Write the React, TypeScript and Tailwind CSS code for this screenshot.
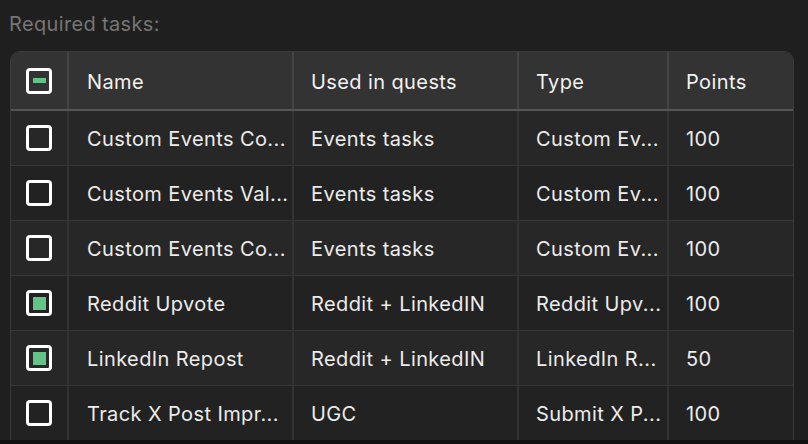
type Task = {
  name: string;
  quests: string;
  type: string;
  points: number;
  checked: boolean;
};

// labels already cut the way the table shows them
const tasks: Task[] = [
  { name: 'Custom Events Co...', quests: 'Events tasks', type: 'Custom Ev...', points: 100, checked: false },
  { name: 'Custom Events Val...', quests: 'Events tasks', type: 'Custom Ev...', points: 100, checked: false },
  { name: 'Custom Events Co...', quests: 'Events tasks', type: 'Custom Ev...', points: 100, checked: false },
  { name: 'Reddit Upvote', quests: 'Reddit + LinkedIN', type: 'Reddit Upv...', points: 100, checked: true },
  { name: 'LinkedIn Repost', quests: 'Reddit + LinkedIN', type: 'LinkedIn R...', points: 50, checked: true },
  { name: 'Track X Post Impr...', quests: 'UGC', type: 'Submit X P...', points: 100, checked: false },
];

function Checkbox({ state }: { state: 'on' | 'off' | 'some' }) {
  return (
    <div className="w-[26px] h-[26px] border-[3px] border-white rounded-[4px] flex items-center justify-center">
      {state === 'on' && <div className="w-[13px] h-[13px] bg-[#62c487]" />}
      {state === 'some' && <div className="w-[13px] h-[5px] bg-[#62c487]" />}
    </div>
  );
}

const grid = 'grid grid-cols-[58px_225px_225px_150px_124px]';

export default function App() {
  return (
    <div
      className="w-[808px] h-[444px] bg-[#1f1f1f] flex flex-col overflow-hidden"
      style={{ fontFamily: 'Inter, "Noto Sans", sans-serif' }}
    >
      <div className="h-[440px] overflow-hidden pl-[9px]">
        <div className="h-[51px] pt-[10px] text-[20px] leading-[28px] tracking-[0.35px] text-[#767676]">
          Required tasks:
        </div>

        <div className="ml-[1px] w-[784px] border border-[#3a3a3a] rounded-t-[10px] overflow-hidden">
          <div className={`${grid} h-[59px] bg-[#333333] border-b-2 border-[#555555] text-[20px] tracking-[0.4px] text-[#f2f2f2]`}>
            <div className="flex items-center justify-center border-r-2 border-[#444444]">
              <Checkbox state="some" />
            </div>
            <div className="flex items-center pt-[2px] px-[18px] border-r-2 border-[#444444]">Name</div>
            <div className="flex items-center pt-[2px] px-[17px] border-r-2 border-[#444444]">Used in quests</div>
            <div className="flex items-center pt-[2px] px-[17px] border-r-2 border-[#444444]">Type</div>
            <div className="flex items-center pt-[2px] px-[17px]">Points</div>
          </div>

          {tasks.map((t, i) => (
            <div
              key={i}
              className={`${grid} h-[55px] border-b border-[#363636] text-[20px] tracking-[0.4px] text-[#ececec] ${
                i % 2 === 0 ? 'bg-[#272727]' : 'bg-[#222222]'
              }`}
            >
              <div className="flex items-center justify-center border-r-2 border-[#333333]">
                <Checkbox state={t.checked ? 'on' : 'off'} />
              </div>
              <div className="flex items-center pt-[2px] pl-[18px] border-r-2 border-[#333333] whitespace-nowrap">
                {t.name}
              </div>
              <div className="flex items-center pt-[2px] pl-[17px] border-r-2 border-[#333333] whitespace-nowrap">
                {t.quests}
              </div>
              <div className="flex items-center pt-[2px] pl-[17px] border-r-2 border-[#333333] whitespace-nowrap">
                {t.type}
              </div>
              <div className="flex items-center pt-[2px] px-[17px]">{t.points}</div>
            </div>
          ))}
        </div>
      </div>
      <div className="h-[4px] bg-[#111111]" />
    </div>
  );
}
